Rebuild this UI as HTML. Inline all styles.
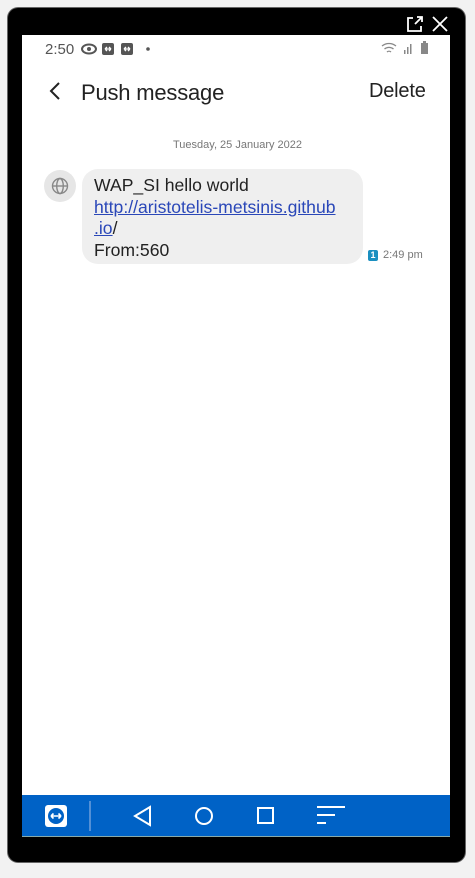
<!DOCTYPE html>
<html><head><style>
body{margin:0;width:475px;height:878px;background:#f2f2f2;font-family:"Liberation Sans",Arial,sans-serif;position:relative;overflow:hidden}
.frame{position:absolute;left:8px;top:8px;width:457px;height:854px;background:#000;border-radius:10px;box-shadow:0 0 0 1px #666}
.screen{position:absolute;left:22px;top:35px;width:428px;height:760px;background:#fff}
.nav{position:absolute;left:22px;top:795px;width:428px;height:41px;background:#0062c6;border-bottom:1px solid #8aa}
.t{position:absolute;white-space:nowrap}
</style></head><body>
<div class="frame"></div>
<svg style="position:absolute;left:405px;top:15px" width="45" height="18" viewBox="0 0 45 18" fill="none" stroke="#fff" stroke-width="1.8">
<path d="M8 3H3v13h13v-5"/><path d="M10 9l7-7M12 2h5v5"/><path d="M28 2l14 14M42 2L28 16"/></svg>
<div class="screen"></div>
<div class="t" style="left:45px;top:41px;font-size:15px;color:#555">2:50</div>
<svg style="position:absolute;left:80px;top:42px" width="75" height="14" viewBox="0 0 75 14">
<ellipse cx="9" cy="7" rx="7" ry="4.5" fill="none" stroke="#555" stroke-width="2"/><circle cx="9" cy="7" r="2" fill="#555"/>
<rect x="22" y="1" width="12" height="12" rx="2" fill="#555"/><path d="M25 7h6M25 7l2-2M25 7l2 2M31 7l-2-2M31 7l-2 2" stroke="#fff" stroke-width="1.3"/>
<rect x="41" y="1" width="12" height="12" rx="2" fill="#555"/><path d="M44 7h6M44 7l2-2M44 7l2 2M50 7l-2-2M50 7l-2 2" stroke="#fff" stroke-width="1.3"/>
<circle cx="68" cy="7" r="1.8" fill="#555"/></svg>
<svg style="position:absolute;left:380px;top:41px" width="52" height="14" viewBox="0 0 52 14">
<path d="M2 5a11 11 0 0 1 14 0M4.5 8a7 7 0 0 1 9 0M7 11a3 3 0 0 1 4 0" fill="none" stroke="#888" stroke-width="1.3"/>
<rect x="24" y="9" width="1.5" height="4" fill="#888"/><rect x="27" y="6" width="1.5" height="7" fill="#888"/><rect x="30" y="3" width="1.5" height="10" fill="#888"/>
<rect x="41" y="2" width="7" height="11" fill="#888"/><rect x="43" y="0" width="3" height="2" fill="#888"/></svg>
<svg style="position:absolute;left:48px;top:81px" width="14" height="20" viewBox="0 0 14 20"><path d="M11 2L3 10l8 8" fill="none" stroke="#222" stroke-width="2"/></svg>
<div class="t" style="left:81px;top:80px;font-size:22px;color:#222;letter-spacing:-0.2px">Push message</div>
<div class="t" style="left:369px;top:80px;font-size:20px;color:#222;letter-spacing:-0.2px">Delete</div>
<div class="t" style="left:0;width:475px;text-align:center;top:139px;font-size:11px;color:#777">Tuesday, 25 January 2022</div>
<div style="position:absolute;left:44px;top:170px;width:32px;height:32px;border-radius:50%;background:#e6e6e6"></div>
<svg style="position:absolute;left:51px;top:177px" width="18" height="18" viewBox="0 0 18 18" fill="none" stroke="#888" stroke-width="1.4"><circle cx="9" cy="9" r="7.5"/><ellipse cx="9" cy="9" rx="3.3" ry="7.5"/><path d="M1.5 9h15"/></svg>
<div style="position:absolute;left:82px;top:169px;width:281px;height:95px;border-radius:16px;background:#efefef"></div>
<div class="t" style="left:94px;top:175px;font-size:17.6px;line-height:21.5px;color:#222">WAP_SI hello world<br><span style="color:#2a47b8;text-decoration:underline">http://aristotelis-metsinis.github</span><br><span style="color:#2a47b8;text-decoration:underline">.io</span>/<br>From:560</div>
<div style="position:absolute;left:368px;top:250px;width:10px;height:11px;background:#1a8fc0;border-radius:2px;color:#fff;font-size:9px;text-align:center;line-height:11px;font-weight:bold">1</div>
<div class="t" style="left:383px;top:249px;font-size:11px;color:#777">2:49 pm</div>
<div class="nav"></div>
<svg style="position:absolute;left:22px;top:795px" width="428" height="41" viewBox="0 0 428 41" fill="none" stroke="#fff" stroke-width="2">
<rect x="23" y="10" width="22" height="22" rx="3" fill="#fff" stroke="none"/><circle cx="34" cy="21" r="8" fill="#0062c6" stroke="none"/><path d="M29 21h10M29 21l2.5-2.5M29 21l2.5 2.5M39 21l-2.5-2.5M39 21l-2.5 2.5" stroke-width="1.6"/>
<path d="M68 6v30" stroke="#6f9fdc" stroke-width="1.5"/>
<path d="M128 12L113 21l15 9z"/><circle cx="182" cy="21" r="8"/><rect x="236" y="13" width="15" height="15"/>
<path d="M295 12h28M295 20h18M295 28h9"/></svg>
</body></html>
